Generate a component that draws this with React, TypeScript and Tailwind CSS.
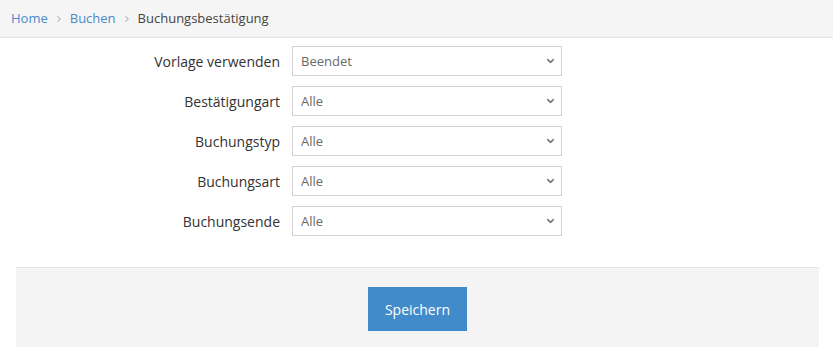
import { ChevronRight, ChevronDown } from "lucide-react"

const fields = [
  { label: "Vorlage verwenden", value: "Beendet", options: ["Beendet", "Aktiv", "Alle"] },
  { label: "Bestätigungart", value: "Alle", options: ["Alle"] },
  { label: "Buchungstyp", value: "Alle", options: ["Alle"] },
  { label: "Buchungsart", value: "Alle", options: ["Alle"] },
  { label: "Buchungsende", value: "Alle", options: ["Alle"] },
]

export default function App() {
  return (
    <div className="min-h-[347px] bg-white text-[#333] font-['Open_Sans',sans-serif]">
      {/* Breadcrumb */}
      <div className="h-[38px] bg-[#f5f5f5] border-b border-[#e3e3e3] flex items-center pl-[11px] text-[13px]">
        <a href="#" className="text-[#4a8ac9]">Home</a>
        <ChevronRight className="w-[10px] h-[10px] mx-[6px] text-[#aaa]" strokeWidth={2.5} />
        <a href="#" className="text-[#4a8ac9]">Buchen</a>
        <ChevronRight className="w-[10px] h-[10px] mx-[6px] text-[#aaa]" strokeWidth={2.5} />
        <span className="text-[#444]">Buchungsbestätigung</span>
      </div>

      {/* Form */}
      <div className="pt-[8px] flex flex-col gap-[10px]">
        {fields.map((f) => (
          <div key={f.label} className="flex items-center">
            <label className="w-[280px] text-right text-[14px] text-[#333]">{f.label}</label>
            <div className="ml-[12px] relative w-[270px] h-[30px]">
              <select
                defaultValue={f.value}
                className="appearance-none w-full h-full border border-[#d3d3d3] bg-white pl-[8px] pt-[1px] text-[13px] text-[#6a6a6a] outline-none"
              >
                {f.options.map((o) => (
                  <option key={o}>{o}</option>
                ))}
              </select>
              <ChevronDown
                className="absolute right-[6px] top-1/2 -translate-y-1/2 w-[11px] h-[11px] text-[#777] pointer-events-none"
                strokeWidth={3.5}
              />
            </div>
          </div>
        ))}
      </div>

      {/* Footer */}
      <div className="mt-[31px] mx-[16px] w-[803px] h-[80px] bg-[#f4f4f4] border-t border-[#e5e5e5] flex justify-center pt-[19px]">
        <button className="w-[99px] h-[44px] bg-[#428bca] text-white text-[14px]">Speichern</button>
      </div>
    </div>
  )
}
